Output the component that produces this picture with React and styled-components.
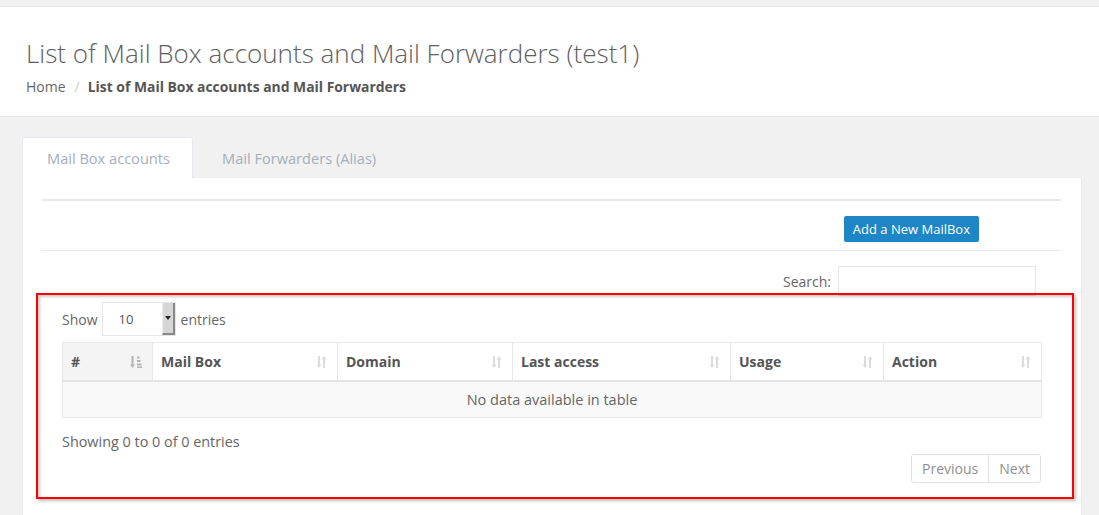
import React from "react";
import styled, { createGlobalStyle } from "styled-components";

const GlobalStyle = createGlobalStyle`
  body {
    margin: 0;
    background: #f1f1f1;
    font-family: "Open Sans", "Liberation Sans", sans-serif;
    font-size: 14px;
    color: #666;
  }
  * { box-sizing: border-box; }
`;

const columns = [
  { label: "#", width: 90, active: true },
  { label: "Mail Box", width: 185 },
  { label: "Domain", width: 175 },
  { label: "Last access", width: 218 },
  { label: "Usage", width: 153 },
  { label: "Action", width: 158 },
];

function SortIcon({ active }) {
  if (active) {
    return (
      <SortSvg width="12" height="14" viewBox="0 0 12 14">
        <path d="M2.5 1v9.5" stroke="#b5b5b5" strokeWidth="2" />
        <path d="M0 9.5h5L2.5 13z" fill="#b5b5b5" />
        <rect x="7" y="1.5" width="2.5" height="2" fill="#b5b5b5" />
        <rect x="7" y="5" width="3.5" height="2" fill="#b5b5b5" />
        <rect x="7" y="8.5" width="4.5" height="2" fill="#b5b5b5" />
        <rect x="7" y="11.5" width="5" height="1.5" fill="#b5b5b5" />
      </SortSvg>
    );
  }
  return (
    <SortSvg width="11" height="14" viewBox="0 0 11 14">
      <path d="M3 1v9" stroke="#dcdcdc" strokeWidth="2" />
      <path d="M0.5 9.5h5L3 13z" fill="#dcdcdc" />
      <path d="M8 13V4" stroke="#dcdcdc" strokeWidth="2" />
      <path d="M5.5 4.5h5L8 1z" fill="#dcdcdc" />
    </SortSvg>
  );
}

export default function App() {
  return (
    <>
      <GlobalStyle />
      <TopStrip />
      <PageHeader>
        <Title>List of Mail Box accounts and Mail Forwarders (test1)</Title>
        <Breadcrumb>
          <Crumb>Home</Crumb>
          <Divider>/</Divider>
          <Crumb current>List of Mail Box accounts and Mail Forwarders</Crumb>
        </Breadcrumb>
      </PageHeader>
      <Content>
        <Tabs>
          <Tab active>Mail Box accounts</Tab>
          <Tab>Mail Forwarders (Alias)</Tab>
        </Tabs>
        <Panel>
          <ThickRule />
          <ButtonRow>
            <PrimaryButton>Add a New MailBox</PrimaryButton>
          </ButtonRow>
          <ThinRule />
          <SearchRow>
            <SearchLabel>Search:</SearchLabel>
            <SearchInput type="text" />
          </SearchRow>
          <Highlight>
            <LengthRow>
              Show
              <SelectBox>
                <SelectValue>10</SelectValue>
                <SelectArrow>
                  <svg width="6" height="4" viewBox="0 0 6 4">
                    <path d="M0 0h6L3 4z" fill="#222" />
                  </svg>
                </SelectArrow>
              </SelectBox>
              entries
            </LengthRow>
            <Table>
              <colgroup>
                {columns.map((c) => (
                  <col key={c.label} style={{ width: c.width }} />
                ))}
              </colgroup>
              <thead>
                <tr>
                  {columns.map((c) => (
                    <Th key={c.label} active={c.active}>
                      {c.label}
                      <SortIcon active={c.active} />
                    </Th>
                  ))}
                </tr>
              </thead>
              <tbody>
                <tr>
                  <EmptyCell colSpan={6}>No data available in table</EmptyCell>
                </tr>
              </tbody>
            </Table>
            <Info>Showing 0 to 0 of 0 entries</Info>
            <PagerRow>
              <Pager>
                <PageButton>Previous</PageButton>
                <PageButton>Next</PageButton>
              </Pager>
            </PagerRow>
          </Highlight>
        </Panel>
      </Content>
    </>
  );
}

const TopStrip = styled.div`
  height: 7px;
  background: #f1f1f1;
  border-bottom: 1px solid #e4e4e4;
`;

const PageHeader = styled.div`
  background: #fff;
  height: 110px;
  padding: 28px 26px 0;
  border-bottom: 1px solid #e6e6e6;
`;

const Title = styled.h1`
  margin: 0;
  font-size: 26px;
  font-weight: 300;
  color: #606060;
  line-height: 36px;
`;

const Breadcrumb = styled.div`
  display: flex;
  align-items: center;
  margin-top: 6px;
  font-size: 14px;
  line-height: 20px;
`;

const Crumb = styled.span`
  color: ${(p) => (p.current ? "#555" : "#666")};
  font-weight: ${(p) => (p.current ? 700 : 400)};
  font-size: ${(p) => (p.current ? "13.9px" : "14px")};
`;

const Divider = styled.span`
  color: #ccc;
  padding: 0 8px 0 9px;
`;

const Content = styled.div`
  padding: 20px 17px 0 22px;
`;

const Tabs = styled.div`
  display: flex;
  height: 41px;
`;

const Tab = styled.div`
  width: ${(p) => (p.active ? "171px" : "210px")};
  display: flex;
  align-items: center;
  padding-left: ${(p) => (p.active ? "24px" : "28px")};
  font-size: 14.6px;
  color: #a5aebd;
  background: ${(p) => (p.active ? "#fff" : "transparent")};
  border: 1px solid ${(p) => (p.active ? "#e6e9ed" : "transparent")};
  border-bottom: none;
  border-radius: 3px 3px 0 0;
`;

const Panel = styled.div`
  background: #fff;
  border: 1px solid #e6e9ed;
  border-top: none;
  padding: 21px 20px 20px 19px;
`;

const ThickRule = styled.div`
  height: 2px;
  background: #e6e9ed;
`;

const ButtonRow = styled.div`
  display: flex;
  justify-content: flex-end;
  padding: 15px 82px 8px 0;
`;

const PrimaryButton = styled.button`
  height: 26px;
  padding: 0 9px;
  border: none;
  border-radius: 2px;
  background: #1e86c6;
  color: #fff;
  font-family: inherit;
  font-size: 13px;
`;

const ThinRule = styled.div`
  height: 1px;
  background: #e8e8e8;
`;

const SearchRow = styled.div`
  display: flex;
  justify-content: flex-end;
  align-items: center;
  padding: 15px 25px 0 0;
`;

const SearchLabel = styled.span`
  color: #666;
  margin-right: 7px;
`;

const SearchInput = styled.input`
  width: 198px;
  height: 30px;
  border: 1px solid #e5e5e5;
  outline: none;
`;

const Highlight = styled.div`
  position: relative;
  margin: -3px -13px 0 -6px;
  height: 206px;
  border: 2px solid #ff0000;
  padding: 7px 31px 0 24px;
  box-shadow: 2px 2px 3px rgba(0, 0, 0, 0.25), inset 2px 2px 3px rgba(0, 0, 0, 0.2);
`;

const LengthRow = styled.div`
  display: flex;
  align-items: center;
  color: #666;
`;

const SelectBox = styled.div`
  display: flex;
  width: 74px;
  height: 34px;
  margin: 0 5px 0 4px;
  border: 1px solid #e5e5e5;
`;

const SelectValue = styled.span`
  flex: 1;
  display: flex;
  align-items: center;
  padding-left: 16px;
  font-size: 13px;
  color: #555;
`;

const SelectArrow = styled.span`
  width: 13px;
  display: flex;
  align-items: center;
  justify-content: center;
  background: #d6d6d6;
  border-left: 1px solid #eee;
  border-right: 2px solid #888;
  border-bottom: 2px solid #888;
`;

const Table = styled.table`
  width: 979px;
  margin-top: 6px;
  border-collapse: collapse;
  table-layout: fixed;
`;

const Th = styled.th`
  position: relative;
  height: 38px;
  padding: 0 8px;
  text-align: left;
  font-size: 14px;
  font-weight: 700;
  color: #555;
  background: ${(p) => (p.active ? "#f4f4f4" : "#fff")};
  border: 1px solid #e8e8e8;
  border-bottom: 2px solid #e4e4e4;
`;

const SortSvg = styled.svg`
  position: absolute;
  right: 10px;
  top: 12px;
`;

const EmptyCell = styled.td`
  height: 37px;
  text-align: center;
  font-size: 14.5px;
  background: #f9f9f9;
  color: #666;
  border: 1px solid #e8e8e8;
`;

const Info = styled.div`
  margin-top: 14px;
  font-size: 14.4px;
  color: #666;
`;

const PagerRow = styled.div`
  display: flex;
  justify-content: flex-end;
  margin-top: 3px;
`;

const Pager = styled.div`
  display: flex;
  border: 1px solid #e0e0e0;
  border-radius: 3px;
`;

const PageButton = styled.span`
  height: 27px;
  display: flex;
  align-items: center;
  padding: 0 10px;
  color: #8f8f8f;
  & + & {
    border-left: 1px solid #e0e0e0;
  }
`;
